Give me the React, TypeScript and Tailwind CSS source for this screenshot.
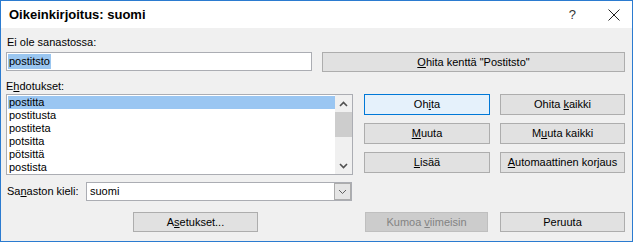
// Spell check dialog (Finnish), Windows 10 style

type BtnProps = {
  children: React.ReactNode
  className?: string
  variant?: 'normal' | 'focus' | 'disabled'
}

function WinButton({ children, className = '', variant = 'normal' }: BtnProps) {
  const look =
    variant === 'focus'
      ? 'bg-[#e5f1fb] border-[#0078d7] text-black'
      : variant === 'disabled'
        ? 'bg-[#cccccc] border-[#bfbfbf] text-[#838383]'
        : 'bg-[#e1e1e1] border-[#adadad] text-black'
  return (
    <div className={`flex items-center justify-center border ${look} ${className}`}>
      <span className="leading-none">{children}</span>
    </div>
  )
}

function U({ children }: { children: React.ReactNode }) {
  return <span className="underline underline-offset-[1px] decoration-1">{children}</span>
}

function Chevron({ up = false, thin = false }: { up?: boolean; thin?: boolean }) {
  return (
    <svg width="9" height="6" viewBox="0 0 9 6" className="block">
      <path
        d={up ? 'M1 5 L4.5 1.5 L8 5' : 'M1 1 L4.5 4.5 L8 1'}
        fill="none"
        stroke={thin ? '#606060' : '#505050'}
        strokeWidth={thin ? 1 : 1.6}
      />
    </svg>
  )
}

const suggestions = ['postitta', 'postitusta', 'postiteta', 'potsitta', 'pötsittä', 'postista']

export default function App() {
  return (
    <div
      className="w-[633px] h-[242px] border border-[#2b7bd0] bg-[#f0f0f0] flex flex-col overflow-hidden text-[11px] text-black"
      style={{ fontFamily: '"Liberation Sans", Arial, sans-serif' }}
    >
      {/* title bar */}
      <div className="h-[27px] shrink-0 bg-white flex items-center">
        <span className="ml-[8px] text-[13px] font-bold">Oikeinkirjoitus: suomi</span>
        <span className="ml-auto mr-[32px] text-[13px] text-[#333]">?</span>
        <svg width="12" height="12" viewBox="0 0 12 12" className="mr-[12px]">
          <path d="M0.5 0.5 L11.5 11.5 M11.5 0.5 L0.5 11.5" stroke="#222" strokeWidth="1" />
        </svg>
      </div>

      {/* body */}
      <div className="flex-1 pl-[5px] pr-[7px]">
        <div className="mt-[6px] h-[16px] leading-[16px] pl-[1px]">Ei ole sanastossa:</div>

        <div className="mt-[2px] flex h-[20px]">
          <div className="w-[306px] h-[19px] bg-white border border-[#abadb3] flex items-center pl-[1px]">
            <span className="bg-[#9ac6f0] px-[1px] h-[15px] leading-[15px]">postitsto</span>
          </div>
          <WinButton className="ml-[10px] flex-1 h-[20px]">
            <U>O</U>hita kenttä "Postitsto"
          </WinButton>
        </div>

        <div className="mt-[6px] h-[16px] leading-[16px]">
          E<U>h</U>dotukset:
        </div>

        <div className="flex">
          {/* suggestion list */}
          <div className="w-[347px] h-[81px] bg-white border border-[#abadb3] flex">
            <div className="flex-1 pt-[1px] pl-[1px]">
              {suggestions.map((s, i) => (
                <div
                  key={s}
                  className={`h-[13px] leading-[13px] pl-[1px] ${i === 0 ? 'bg-[#9ac6f2]' : ''}`}
                >
                  {s}
                </div>
              ))}
            </div>
            <div className="w-[17px] bg-[#f0f0f0] flex flex-col items-center">
              <div className="h-[17px] flex items-center justify-center">
                <Chevron up />
              </div>
              <div className="w-[17px] h-[25px] bg-[#cdcdcd]" />
              <div className="flex-1" />
              <div className="h-[17px] flex items-center justify-center">
                <Chevron />
              </div>
            </div>
          </div>

          {/* action buttons */}
          <div className="ml-[11px] grid grid-cols-[126px_125px] auto-rows-[21px] gap-x-[10px] gap-y-[8px]">
            <WinButton variant="focus">
              Oh<U>i</U>ta
            </WinButton>
            <WinButton>
              Ohita <U>k</U>aikki
            </WinButton>
            <WinButton>
              <U>M</U>uuta
            </WinButton>
            <WinButton>
              M<U>u</U>uta kaikki
            </WinButton>
            <WinButton>
              <U>L</U>isää
            </WinButton>
            <WinButton>
              <U>A</U>utomaattinen korjaus
            </WinButton>
          </div>
        </div>

        {/* dictionary language */}
        <div className="mt-[7px] flex items-center h-[19px]">
          <div className="w-[80px] pl-[1px]">
            Sa<U>n</U>aston kieli:
          </div>
          <div className="w-[266px] h-[19px] bg-white border border-[#abadb3] flex items-center">
            <span className="pl-[3px] flex-1">suomi</span>
            <div className="w-[17px] h-[17px] bg-[#e5e5e5] border border-[#acacac] flex items-center justify-center">
              <Chevron thin />
            </div>
          </div>
        </div>

        {/* bottom buttons */}
        <div className="mt-[11px] flex h-[20px]">
          <WinButton className="ml-[127px] w-[125px]">
            A<U>s</U>etukset...
          </WinButton>
          <WinButton variant="disabled" className="ml-[107px] w-[123px]">
            Kumoa <U>v</U>iimeisin
          </WinButton>
          <WinButton className="ml-[12px] w-[125px]">Peruuta</WinButton>
        </div>
      </div>
    </div>
  )
}
